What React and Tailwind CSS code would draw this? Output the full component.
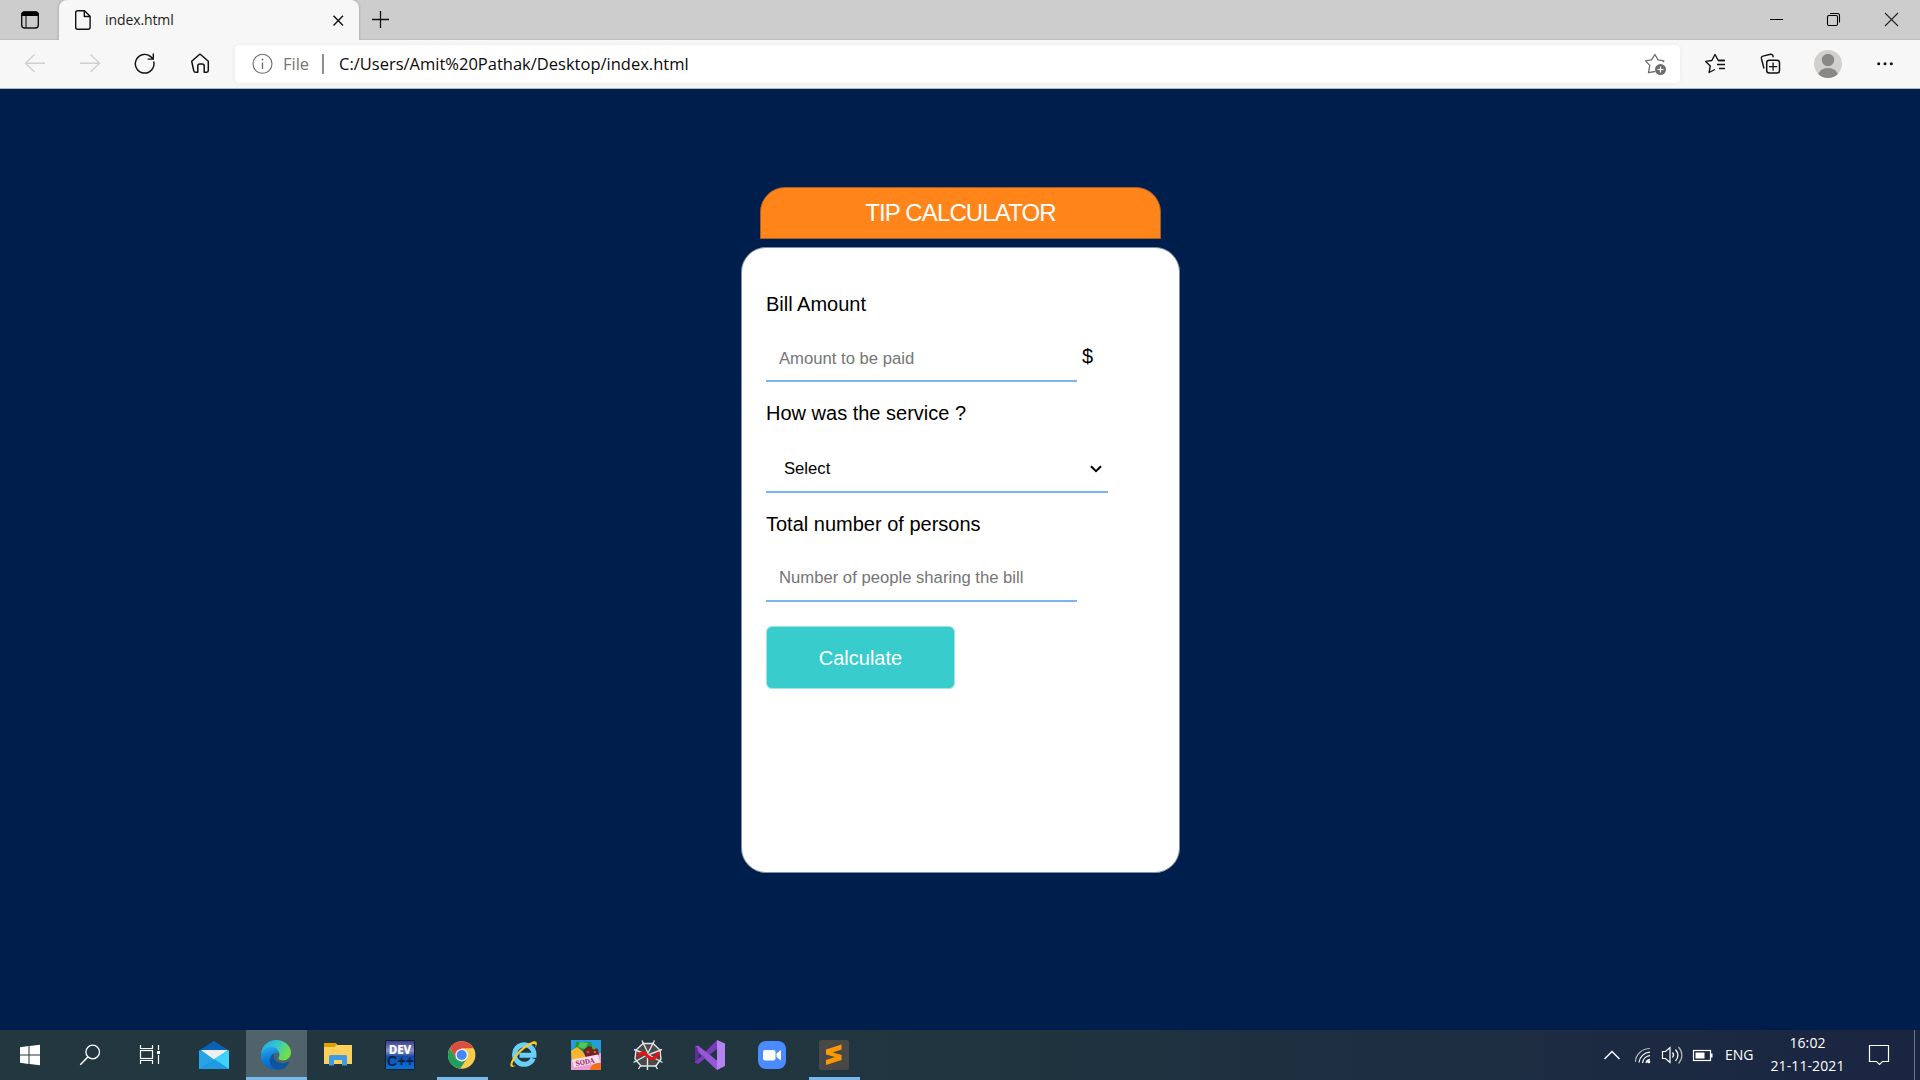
const ui = "font-['Open_Sans','Noto_Sans',sans-serif]";

/* Icon on a window of the 1920x1080 desktop grid: (x, y) is the window's corner. */
function Icon({ x, y, w, h, children, className = "" }) {
  return (
    <svg width={w} height={h} viewBox={`${x} ${y} ${w} ${h}`} className={`block shrink-0 ${className}`} fill="none" stroke="none">
      {children}
    </svg>
  );
}

function TabStrip() {
  return (
    <div className="flex h-10 bg-[#cdcdcd] shadow-[inset_0_-1px_0_#bdbdbd]">
      <Icon x={0} y={0} w={59} h={40}>
        <rect x="21.7" y="12" width="16.6" height="16" rx="3" stroke="#111" strokeWidth="1.4" />
        <path d="M21.5 16v-2a2.5 2.5 0 0 1 2.5-2.5h12a2.5 2.5 0 0 1 2.5 2.5v2z" fill="#000" />
        <path d="M26 16v12" stroke="#222" strokeWidth="1.2" />
      </Icon>
      <div className="relative flex h-10 w-[300px] items-center rounded-t-[8px] bg-[#f7f7f7] shadow-[0_0_3px_rgba(0,0,0,0.25)]">
        <Icon x={59} y={0} w={46} h={40}>
          <path d="M77.5 10.7h7l5.6 5.6v10.9a2 2 0 0 1-2 2H77.7a2 2 0 0 1-2-2V12.7a2 2 0 0 1 2-2zM84.3 10.9v5.6h5.7" stroke="#111" strokeWidth="1.4" strokeLinejoin="round" />
        </Icon>
        <span className={`${ui} w-[219px] text-[14px] leading-10 tracking-[-0.1px] text-[#1b1b1b]`}>index.html</span>
        <Icon x={324} y={0} w={30} h={40}>
          <path d="M333.5 15.7l9.500 9.800M343 15.7l-9.500 9.800" stroke="#111" strokeWidth="1.4" />
        </Icon>
      </div>
      <Icon x={359} y={0} w={50} h={40}>
        <path d="M372 19.5h17M380.5 11v17" stroke="#111" strokeWidth="1.3" />
      </Icon>
      <div className="flex-1" />
      <Icon x={1748} y={0} w={172} h={40}>
        <path d="M1770 19.5h13" stroke="#000" />
        <rect x="1827.5" y="15.5" width="10" height="10" rx="1.5" stroke="#000" strokeWidth="1.1" />
        <path d="M1830 13.5h7.500a2 2 0 0 1 2 2v7" stroke="#000" strokeWidth="1.1" />
        <path d="M1885 13l13 13M1898 13l-13 13" stroke="#222" strokeWidth="1.1" />
      </Icon>
    </div>
  );
}

function Toolbar() {
  return (
    <div className="relative flex h-[49px] items-start border-b border-[#b5b5b5] bg-[#f7f7f7]">
      <Icon x={0} y={40} w={235} h={48}>
        <path d="M45 63.3H26M34.5 54.5l-9 8.800 9 8.800" stroke="#d0d0d0" strokeWidth="1.4" />
        <path d="M80 63.3h19M90.5 54.5l9 8.800-9 8.800" stroke="#d0d0d0" strokeWidth="1.4" />
        <path d="M153.7 61.5a9.300 9.300 0 1 1-3.300-5.100l2.800 2.600M153.3 53.5v5.600h-5.600" stroke="#111" strokeWidth="1.4" />
        <path d="M191.7 61.3l7.400-6.600a1.300 1.300 0 0 1 1.800 0l7.400 6.600v9.200a1.700 1.700 0 0 1-1.700 1.700h-2.400v-6.200a2 2 0 0 0-2-2h-2.400a2 2 0 0 0-2 2v6.200h-2.400a1.700 1.700 0 0 1-1.700-1.700z" stroke="#111" strokeWidth="1.5" strokeLinejoin="round" />
      </Icon>
      <div className="mt-[5px] flex h-[38px] w-[1445px] items-center rounded-[5px] bg-white shadow-[0_0_4px_rgba(0,0,0,0.07)]">
        <Icon x={235} y={45} w={48} h={38}>
          <circle cx="262.5" cy="63.8" r="9.5" stroke="#6b6b6b" strokeWidth="1.1" />
          <path d="M262.5 62.5v6.500" stroke="#6b6b6b" strokeWidth="1.3" />
          <circle cx="262.5" cy="59.5" r="0.9" fill="#6b6b6b" />
        </Icon>
        <span className={`${ui} w-[39px] text-[16.5px] leading-[36px] text-[#767676]`}>File</span>
        <span className="mr-[15px] h-5 w-[2px] bg-[#8f8f8f]" />
        <span className={`${ui} flex-1 text-[16.5px] leading-[36px] text-[#0a0a0a]`}>C:/Users/Amit%20Pathak/Desktop/index.html</span>
        <Icon x={1635} y={45} w={45} h={38}>
          <path d="M1655 71.5l-6.500 1.200 1.300-7.300-4.300-4.500 6-1 3.400-5.400 3.200 5.400 5.800 1-1 1.300" stroke="#6d6d6d" strokeWidth="1.3" strokeLinejoin="round" />
          <circle cx="1660.5" cy="69.5" r="5.5" fill="#6d6d6d" />
          <path d="M1657.5 69.5h6M1660.5 66.5v6" stroke="#fff" strokeWidth="1.2" />
        </Icon>
      </div>
      <Icon x={1680} y={40} w={240} h={48}>
        <path d="M1724.5 60.5h-6.200l-3.300-6-3.200 6-6.100.9 4.600 4.500-1.200 6.600 5.800-3" stroke="#111" strokeWidth="1.4" strokeLinejoin="round" />
        <path d="M1718.5 60.5h6.500M1717 64.5h8M1719 68.5h6" stroke="#111" strokeWidth="1.3" />
        <path d="M1764 68.5l-2.600-10a2 2 0 0 1 1.500-2.400l7.600-1.800a2 2 0 0 1 2.400 1.500l.4 1.500" stroke="#111" strokeWidth="1.4" />
        <rect x="1766.7" y="60.2" width="12.8" height="12.8" rx="2.5" stroke="#111" strokeWidth="1.5" />
        <path d="M1769 66.6h8.200M1773.1 62.5v8.200" stroke="#111" strokeWidth="1.3" />
        <clipPath id="avatar"><circle cx="1828" cy="64" r="14" /></clipPath>
        <circle cx="1828" cy="64" r="14" fill="#d2d0ce" />
        <g clipPath="url(#avatar)" fill="#8a8886">
          <circle cx="1828" cy="60" r="6.2" />
          <ellipse cx="1828" cy="76" rx="10" ry="8" />
        </g>
        <g fill="#111"><circle cx="1878.7" cy="63.7" r="1.5" /><circle cx="1885" cy="63.7" r="1.5" /><circle cx="1891.3" cy="63.7" r="1.5" /></g>
      </Icon>
    </div>
  );
}

function Calculator() {
  return (
    <main className="flex h-[941px] flex-col items-center bg-[#001e4c] pt-[98px] font-['Liberation_Sans',Arial,sans-serif] text-black">
      <h1 className="ml-px h-[52px] w-[401px] rounded-t-[25px] border border-[#a05f2e] bg-[#ff851b] text-center text-[24px] leading-[50px] tracking-[-0.87px] text-white">TIP CALCULATOR</h1>
      <section className="ml-px mt-2 flex h-[626px] w-[439px] flex-col items-start rounded-[25px] border border-[#8090a6] bg-white pl-[24px] pt-[43px]">
        <label className="h-[26px] text-[20px] leading-[26px]">Bill Amount</label>
        <div className="mt-[14px] flex h-[51px] items-start">
          <input className="h-[51px] w-[311px] border-b-2 border-[#7bb5ed] px-[13px] pt-1.5 text-[16.67px] outline-none placeholder:text-[#757575]" placeholder="Amount to be paid" />
          <span className="ml-[5px] mt-3 text-[20px] leading-[26px]">$</span>
        </div>
        <label className="mt-[18px] h-[26px] text-[20px] leading-[26px]">How was the service ?</label>
        <div className="mt-[17px] flex h-[50px] w-[342px] items-center justify-between border-b-2 border-[#7bb5ed] pl-[18px] pr-1.5 pt-[3px] text-[16.67px]">
          <span>Select</span>
          <svg width="12" height="8" viewBox="0 0 12 8" fill="none"><path d="M1 1.2l5 5 5-5" stroke="#000" strokeWidth="2" /></svg>
        </div>
        <label className="mt-[18px] h-[26px] text-[20px] leading-[26px]">Total number of persons</label>
        <input className="mt-[14px] h-[51px] w-[311px] border-b-2 border-[#7bb5ed] px-[13px] pt-1 text-[16.67px] outline-none placeholder:text-[#757575]" placeholder="Number of people sharing the bill" />
        <button className="mt-6 h-[63px] w-[189px] rounded-[6px] border border-[#9ce5e5] bg-[#39cccc] text-[20px] text-white">Calculate</button>
      </section>
    </main>
  );
}

function AppCell({ x, children, active = false, open = false }) {
  return (
    <div className="relative h-[50px] w-[62px] shrink-0">
      {active && <div className="absolute inset-y-0 left-0 w-[61px] border-b-[3px] border-[#76b9ed] bg-[#50636b]" />}
      {open && <div className="absolute bottom-0 left-[5px] h-[3px] w-[51px] bg-[#76b9ed]" />}
      <Icon x={x} y={1030} w={62} h={50} className="relative">{children}</Icon>
    </div>
  );
}

function Taskbar() {
  return (
    <footer className="flex h-[50px] bg-gradient-to-r from-[#23373f] via-[#20353f] to-[#1a2542]">
      <Icon x={0} y={1030} w={184} h={50}>
        <path d="M20 1047.3l8.500-1.200v8.400H20zM29.5 1046l10.500-1.300v9.800H29.5zM20 1055.5h8.500v8.400l-8.500-1.200zM29.5 1055.5H40v9.700l-10.500-1.300z" fill="#fff" />
        <circle cx="92.7" cy="1052" r="6.8" stroke="#fff" strokeWidth="1.3" />
        <path d="M87.8 1057l-7.500 7.700" stroke="#fff" strokeWidth="1.5" />
        <path d="M140.5 1045v3.500h12V1045M140.5 1064v-3.500h12v3.500M158.5 1045v5M158.5 1055v9" stroke="#fff" strokeWidth="1.2" />
        <rect x="140.5" y="1050.5" width="12" height="8" stroke="#fff" strokeWidth="1.2" />
        <rect x="157" y="1051" width="3" height="3" fill="#fff" />
      </Icon>
      <AppCell x={184}>
        <path d="M199 1050.5l15-9.500 15 9.500v3h-30z" fill="#0961b5" />
        <path d="M199 1050.5h30v18.500h-30z" fill="#25a5e8" />
        <path d="M201 1050h27l-14 9.500z" fill="#efeff2" />
        <path d="M229 1050l-15 9 15 10z" fill="#3fd2fb" />
        <path d="M199 1069l15-10 15 10z" fill="#168bd8" opacity=".4" />
      </AppCell>
      <AppCell x={246} active>
        <defs>
          <linearGradient id="edgeTop" x1="0" y1="0" x2="1" y2=".4"><stop offset="0" stopColor="#2aa5df" /><stop offset=".5" stopColor="#2fc4d5" /><stop offset="1" stopColor="#70e04a" /></linearGradient>
          <linearGradient id="edgeLow" x1="0" y1="0" x2=".3" y2="1"><stop offset="0" stopColor="#2db2ed" /><stop offset=".6" stopColor="#0b79d5" /><stop offset="1" stopColor="#0d68bd" /></linearGradient>
        </defs>
        <path d="M261 1053c1-7 7-13 15.500-13 8 0 14.500 6 14.500 12.500 0 5-4 8-8 8-3 0-5-1-4.500-2.500 3-4-1-9-6-8-5 .5-9 2-11.500 3z" fill="url(#edgeTop)" />
        <path d="M261 1056c0-6 5-9 10-9 6 0 8 4 8 6-4-1-7 2-7 6 0 4 3 8 10 9-11 5-21-2-21-12z" fill="url(#edgeLow)" />
        <path d="M274 1053c-7 5-5 16 5 17 4 0 8-3 10-7 .5-1-.5-1.500-1.300-1-7 3-14 0-14-6z" fill="#0c55a0" />
      </AppCell>
      <AppCell x={308}>
        <path d="M324 1043h11.500l2 2H352v19h-28z" fill="#fdcf5c" />
        <path d="M324 1043h11.500l1.500 1.500-2.500 2.500H324z" fill="#e0a000" />
        <path d="M329 1065.5v-9a1.500 1.500 0 0 1 1.500-1.500h15a1.500 1.500 0 0 1 1.500 1.500v9h-5V1060h-8v5.500z" fill="#3c9be5" />
      </AppCell>
      <AppCell x={370}>
        <defs><linearGradient id="dev" x1="0" y1="0" x2="0" y2="1"><stop stopColor="#34378d" /><stop offset=".35" stopColor="#8b91c4" /><stop offset=".55" stopColor="#164ba8" /><stop offset="1" stopColor="#0875d8" /></linearGradient></defs>
        <rect x="385.5" y="1040.5" width="29" height="29" rx="1" fill="url(#dev)" stroke="#141b2c" />
        <text x="400" y="1053.5" textAnchor="middle" fontFamily="Noto Sans" fontWeight="800" fontSize="11.5" fill="#fff">DEV</text>
        <text x="400.5" y="1066.3" textAnchor="middle" textLength="27" fontFamily="Liberation Sans" fontWeight="700" fontSize="14" fill="#08214a">C++</text>
      </AppCell>
      <AppCell x={432} open>
        <circle cx="461.7" cy="1055" r="13.7" fill="#fccb4c" />
        <path d="M449.9 1048.1a13.700 13.700 0 0 1 23.700.1h-11.900l-6 10.300z" fill="#db4d3f" />
        <path d="M449.8 1048.2l5.900 10.200 6 3.500 5.300-3.500-6.800 10.200a13.700 13.700 0 0 1-10.400-20.400z" fill="#1da05d" />
        <circle cx="461.7" cy="1055" r="6.3" fill="#f1f1f1" />
        <circle cx="461.7" cy="1055" r="5" fill="#4587f4" />
      </AppCell>
      <AppCell x={494}>
        <path d="M533.2 1058.5a9.700 9.700 0 1 1 .8-3.300h-14.500" stroke="#68d0fa" strokeWidth="5" />
        <path d="M516 1065.5c-4 2.700-7 1.500-5-3.500 3-8 14-18 21.500-20.300 5-1.500 5.500 2 2.500 7 1.500-4 .5-5.500-3-4.300-7 2.600-15 10.500-18.500 16.800-2 3.700-1 5.500 2.500 4.300z" fill="#f8cb28" />
      </AppCell>
      <AppCell x={556}>
        <rect x="571" y="1040" width="30" height="30" fill="#249ce2" />
        <path d="M571 1060l30-7v17h-30z" fill="#ee9ad6" />
        <path d="M576 1042l15 0 2 6-6 5-12-4z" fill="#249644" />
        <path d="M580 1042l8 1-3 6-7-2z" fill="#51c85e" />
        <path d="M571 1051l6-4 5 4 4 6-14 4z" fill="#fdb52b" />
        <path d="M583 1050l6-4 9 3 1 6-13 3z" fill="#6d241f" />
        <circle cx="594" cy="1047.5" r="2" fill="#3fb241" /><circle cx="588" cy="1052" r="1.5" fill="#dd3b31" /><circle cx="595" cy="1052" r="1.3" fill="#de5538" />
        <path d="M572 1059.500l26-5 2 8-26 5z" fill="#f9dcea" />
        <text x="576" y="1066" transform="rotate(-10 576 1066)" fontFamily="DejaVu Serif" fontWeight="700" fontSize="7" textLength="19" lengthAdjust="spacingAndGlyphs" fill="#9a2c67">SODA</text>
        <path d="M590 1069c1-4 5-6.500 11-6v7h-11z" fill="#f2701c" />
      </AppCell>
      <AppCell x={618}>
        <path d="M643 1043.500h10l7 6.500 1 9-5 7h-15l-6-7 1-9z" fill="#4a4a4a" stroke="#e4e4e4" strokeWidth="1.4" />
        <path d="M642 1040.500l6 12.500 6.500-12.500M634 1049.500l14 5.500 14-5.500M633.500 1062.500l14.500-8 14.500 8M647.5 1055v15M638.500 1069l2.500-4M657.500 1069l-2.500-4" stroke="#e4e4e4" strokeWidth="1.4" />
        <path d="M638.500 1056c3-4.500 6-3.500 9 0 3.500 4 7 3.500 11-2.500" stroke="#f00e0e" strokeWidth="3" strokeLinecap="round" />
      </AppCell>
      <AppCell x={680}>
        <path d="M695 1046.5l2-1 20 16-.5 8.200-18-17-.5 8.500-3 1.500z" fill="#8f4ecb" />
        <path d="M695 1046.5l3.500 2v11l-3.500 2.800z" fill="#5a2f97" />
        <path d="M695 1062.5l22-22.500v9l-19 15z" fill="#7a3cb8" />
        <path d="M698 1045.5l19 15v9.500l-19.500-20z" fill="#9658d4" />
        <path d="M717 1040l8 3.500v22.500l-8 4z" fill="#b583ef" />
      </AppCell>
      <AppCell x={742}>
        <rect x="758" y="1041" width="28" height="28" rx="8" fill="#4a8cff" />
        <rect x="763" y="1050" width="12.5" height="10.5" rx="2" fill="#fff" />
        <path d="M776.5 1053.5l4.500-3.500v10.500l-4.500-3.500z" fill="#fff" />
      </AppCell>
      <AppCell x={804} open>
        <rect x="819" y="1040" width="30" height="30" rx="2" fill="#484848" />
        <path d="M826 1049.5l15.500-5v5l-9 3 9 2.500v5L826 1065v-5l9-3-9-2.500z" fill="#ff9800" />
      </AppCell>
      <div className="flex-1" />
      <Icon x={1590} y={1030} w={135} h={50}>
        <path d="M1604.5 1059l7.500-7.500 7.500 7.500" stroke="#fff" strokeWidth="1.4" />
        <g stroke="#fff" strokeWidth="1.2">
          <path d="M1635.5 1062c0-7.500 6.500-13.500 14.500-13.500" opacity=".65" />
          <path d="M1639 1062.5c.5-5.500 5-10 11-10.300" />
          <path d="M1642.5 1063c.5-4 3.500-7 7.500-7.300M1646 1063c.3-2 2-3.500 4-3.700" />
          <path d="M1662.5 1051.5h3l4.500-4v15l-4.500-4h-3z" />
          <path d="M1672.5 1052.5c1.300 1.500 1.300 3.500 0 5M1675.5 1049.5c3 3.500 3 8 0 11.500" />
          <path d="M1678.5 1047c4.500 5 4.500 11.500 0 16.500" opacity=".65" />
          <rect x="1693.5" y="1050.5" width="17" height="10" />
        </g>
        <circle cx="1648.7" cy="1061.7" r="1.6" fill="#fff" />
        <path d="M1695.5 1052.5h9v6h-9zM1710.5 1053.5h2v4h-2z" fill="#fff" />
      </Icon>
      <span className={`${ui} w-[42px] text-[14px] leading-[50px] text-white`}>ENG</span>
      <div className={`${ui} flex w-[81px] flex-col items-center pt-px text-[14px] leading-[23px] tracking-[0.1px] text-white`}>
        <span>16:02</span>
        <span>21-11-2021</span>
      </div>
      <Icon x={1848} y={1030} w={72} h={50}>
        <path d="M1869.5 1045.5h19v16h-6l-3 3-3-3h-7z" stroke="#fff" strokeWidth="1.2" />
        <path d="M1914.5 1030v50" stroke="#6d7688" />
      </Icon>
    </footer>
  );
}

export default function App() {
  return (
    <div className="flex h-[1080px] w-[1920px] flex-col overflow-hidden">
      <TabStrip />
      <Toolbar />
      <Calculator />
      <Taskbar />
    </div>
  );
}
